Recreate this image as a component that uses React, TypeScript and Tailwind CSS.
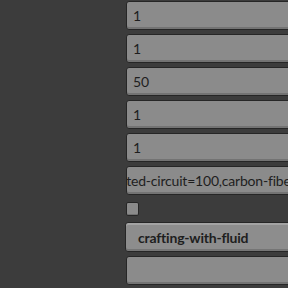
import React from 'react';

const values = ['1', '1', '50', '1', '1'];

function Field({ children }: { children?: React.ReactNode }) {
  return (
    <div className="h-[29px] w-[200px] shrink-0 overflow-hidden whitespace-nowrap rounded-[3px] border border-[#262626] bg-[#8b8b8b] pl-[6px] text-[14px] leading-[27px] tracking-[-0.2px] text-[#1e1e1e] shadow-[inset_0_-2px_0_#737373]">
      {children}
    </div>
  );
}

export default function App() {
  return (
    <div className="flex h-[288px] w-[288px] overflow-hidden bg-[#3c3c3c] font-['Lato',sans-serif]">
      <div className="w-[126px] shrink-0" />
      <div className="flex flex-col pt-[1px]">
        <div className="flex flex-col gap-[4px]">
          {values.map((v, i) => (
            <Field key={i}>{v}</Field>
          ))}
          <Field>
            <span className="ml-[-30px]">printed-circuit=100,carbon-fiber=50</span>
          </Field>
        </div>
        <div className="mt-[7px] h-[14px] w-[13px] rounded-[2px] border border-[#262626] bg-[#8a8a8a] shadow-[inset_0_-1px_0_#707070]" />
        <div className="mt-[6px] ml-[-1px] flex h-[30px] w-[200px] items-center rounded-[3px] border border-[#262626] bg-[#8d8d8d] pl-[12px] text-[14px] font-bold tracking-[-0.2px] text-[#1e1e1e] shadow-[inset_0_2px_0_#a3a3a3,inset_0_-2px_0_#757575]">
          crafting-with-fluid
        </div>
        <div className="mt-[4px]">
          <Field />
        </div>
      </div>
    </div>
  );
}
